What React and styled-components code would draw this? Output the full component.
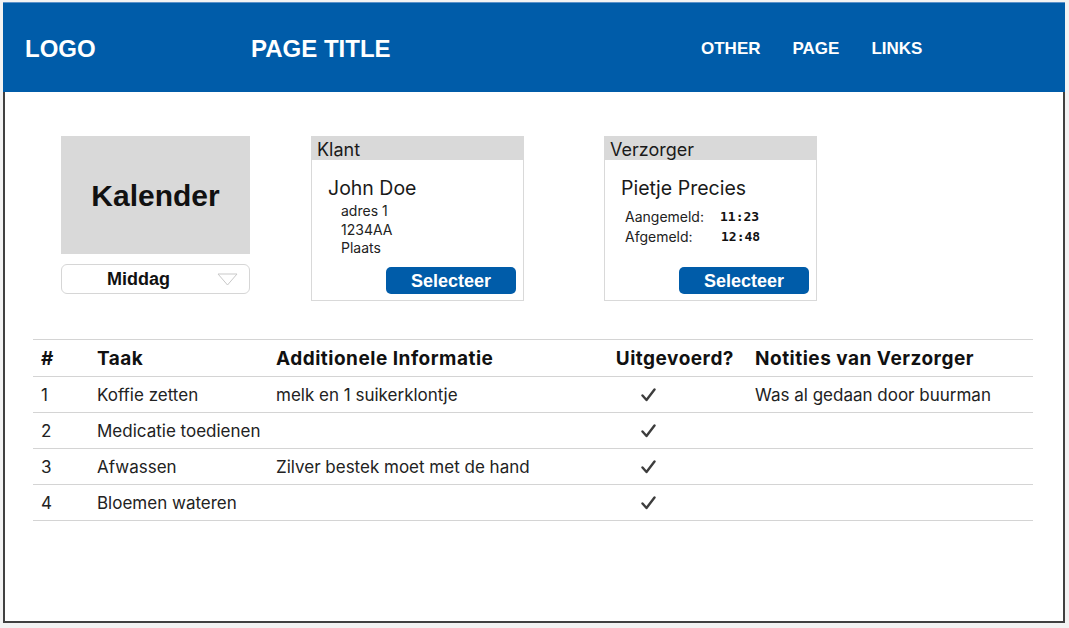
import React from "react";
import styled, { createGlobalStyle } from "styled-components";

const GlobalStyle = createGlobalStyle`
  body {
    margin: 0;
    background: #f3f3f3;
    font-family: "Inter", "Liberation Sans", sans-serif;
    color: #1a1a1a;
  }
`;

const Frame = styled.div`
  margin: 2px 0 0 3px;
  width: 1062px;
`;

const Header = styled.header`
  height: 90px;
  background: #005ca9;
  border-top: 1px solid #5d92c9;
  box-sizing: border-box;
  display: grid;
  grid-template-columns: 226px 450px auto;
  align-items: center;
  padding: 2px 0 0 22px;
  color: #fff;
`;

const Logo = styled.div`
  font-family: "Liberation Sans", Arial, sans-serif;
  font-weight: 700;
  font-size: 24px;
`;

const Title = styled(Logo)``;

const Nav = styled.nav`
  display: flex;
  gap: 32px;
`;

const NavLink = styled.a`
  font-family: "Liberation Sans", Arial, sans-serif;
  font-weight: 700;
  font-size: 17px;
  color: #fff;
  text-decoration: none;
`;

const Content = styled.main`
  height: 531px;
  box-sizing: border-box;
  border: 2px solid #414141;
  border-top: none;
  background: #fff;
  padding: 44px 0 0 28px;
`;

const TopRow = styled.section`
  display: flex;
  align-items: flex-start;
  padding-left: 28px;
`;

const CalendarColumn = styled.div`
  width: 189px;
  display: flex;
  flex-direction: column;
  gap: 10px;
`;

const CalendarBox = styled.div`
  height: 118px;
  padding-top: 2px;
  box-sizing: border-box;
  background: #d9d9d9;
  display: flex;
  align-items: center;
  justify-content: center;
  font-family: "Liberation Sans", Arial, sans-serif;
  font-weight: 700;
  font-size: 30px;
  color: #111;
`;

const Dropdown = styled.div`
  height: 30px;
  box-sizing: border-box;
  border: 1px solid #d6d6d6;
  border-radius: 6px;
  display: flex;
  align-items: center;
  padding: 1px 11px 0 45px;
  font-family: "Liberation Sans", Arial, sans-serif;
  font-weight: 700;
  font-size: 18px;
  color: #111;

  span {
    flex: 1;
  }
`;

const Card = styled.div`
  margin-left: ${(p) => p.$offset}px;
  width: 213px;
  height: 165px;
  box-sizing: border-box;
  border: 1px solid #d9d9d9;
  display: flex;
  flex-direction: column;
  padding-bottom: 6px;
`;

const CardHead = styled.div`
  height: 23px;
  background: #d9d9d9;
  font-size: 18px;
  line-height: 25px;
  padding-left: 5px;
  color: #1a1a1a;
`;

const CardName = styled.div`
  font-size: 19.5px;
  line-height: 24px;
  margin: 16px 0 0 16px;
  color: #1a1a1a;
`;

const Address = styled.div`
  margin: 2px 0 0 29px;
  font-size: 14px;
  line-height: 18.5px;
  color: #222;
`;

const TimeGrid = styled.div`
  display: grid;
  grid-template-columns: 95px auto;
  margin: 7px 0 0 20px;
  font-size: 14px;
  line-height: 20px;
  color: #222;
`;

const Time = styled.span`
  font-family: "DejaVu Sans Mono", "Liberation Mono", monospace;
  font-weight: 700;
  font-size: 13px;
  color: #111;
  padding-left: ${(p) => p.$shift || 0}px;
`;

const SelectButton = styled.button`
  margin-top: auto;
  align-self: flex-end;
  margin-right: 7px;
  width: 130px;
  height: 27px;
  border: none;
  border-radius: 5px;
  background: #005ca9;
  color: #fff;
  font-family: "Liberation Sans", Arial, sans-serif;
  font-weight: 700;
  font-size: 18px;
  padding: 1px 0 0;
`;

const Table = styled.div`
  margin-top: 38px;
  width: 1000px;
  display: grid;
  grid-template-columns: 56px 179px 294px 185px 1fr;
  border-top: 1px solid #d4d4d4;
`;

const Cell = styled.div`
  height: ${(p) => (p.$head ? 37 : 36)}px;
  display: flex;
  align-items: center;
  justify-content: ${(p) =>
    p.$align === "right" ? "flex-end" : p.$align === "center" ? "center" : "flex-start"};
  padding: 1px ${(p) => (p.$align ? 13 : 0)}px 0 ${(p) => (p.$align ? 0 : 8)}px;
  box-sizing: border-box;
  border-bottom: 1px solid #d4d4d4;
  font-size: ${(p) => (p.$head ? 19 : 17)}px;
  letter-spacing: ${(p) => (p.$head ? 0.5 : 0)}px;
  font-weight: ${(p) => (p.$head ? 700 : 400)};
  color: ${(p) => (p.$head ? "#111" : "#222")};
  white-space: nowrap;
`;

const Check = () => (
  <svg width="15" height="14" viewBox="0 0 15 14">
    <path
      d="M1.5 7.5 L5.5 12 L13.5 1.5"
      fill="none"
      stroke="#3d3d3d"
      strokeWidth="2.4"
      strokeLinecap="round"
      strokeLinejoin="round"
    />
  </svg>
);

const tasks = [
  { n: 1, task: "Koffie zetten", info: "melk en 1 suikerklontje", note: "Was al gedaan door buurman" },
  { n: 2, task: "Medicatie toedienen", info: "", note: "" },
  { n: 3, task: "Afwassen", info: "Zilver bestek moet met de hand", note: "" },
  { n: 4, task: "Bloemen wateren", info: "", note: "" },
];

export default function App() {
  return (
    <>
      <GlobalStyle />
      <Frame>
        <Header>
          <Logo>LOGO</Logo>
          <Title>PAGE TITLE</Title>
          <Nav>
            <NavLink>OTHER</NavLink>
            <NavLink>PAGE</NavLink>
            <NavLink>LINKS</NavLink>
          </Nav>
        </Header>
        <Content>
          <TopRow>
            <CalendarColumn>
              <CalendarBox>Kalender</CalendarBox>
              <Dropdown>
                <span>Middag</span>
                <svg width="21" height="13" viewBox="0 0 21 13">
                  <path d="M1 1 L20 1 L10.5 12 Z" fill="none" stroke="#c9c9c9" strokeWidth="1" />
                </svg>
              </Dropdown>
            </CalendarColumn>
            <Card $offset={61}>
              <CardHead>Klant</CardHead>
              <CardName>John Doe</CardName>
              <Address>
                adres 1
                <br />
                1234AA
                <br />
                Plaats
              </Address>
              <SelectButton>Selecteer</SelectButton>
            </Card>
            <Card $offset={80}>
              <CardHead>Verzorger</CardHead>
              <CardName>Pietje Precies</CardName>
              <TimeGrid>
                <span>Aangemeld:</span>
                <Time>11:23</Time>
                <span>Afgemeld:</span>
                <Time $shift={1}>12:48</Time>
              </TimeGrid>
              <SelectButton>Selecteer</SelectButton>
            </Card>
          </TopRow>
          <Table>
            <Cell $head>#</Cell>
            <Cell $head>Taak</Cell>
            <Cell $head>Additionele Informatie</Cell>
            <Cell $head $align="right">Uitgevoerd?</Cell>
            <Cell $head>Notities van Verzorger</Cell>
            {tasks.map((t) => (
              <React.Fragment key={t.n}>
                <Cell>{t.n}</Cell>
                <Cell>{t.task}</Cell>
                <Cell>{t.info}</Cell>
                <Cell $align="center">
                  <Check />
                </Cell>
                <Cell>{t.note}</Cell>
              </React.Fragment>
            ))}
          </Table>
        </Content>
      </Frame>
    </>
  );
}
